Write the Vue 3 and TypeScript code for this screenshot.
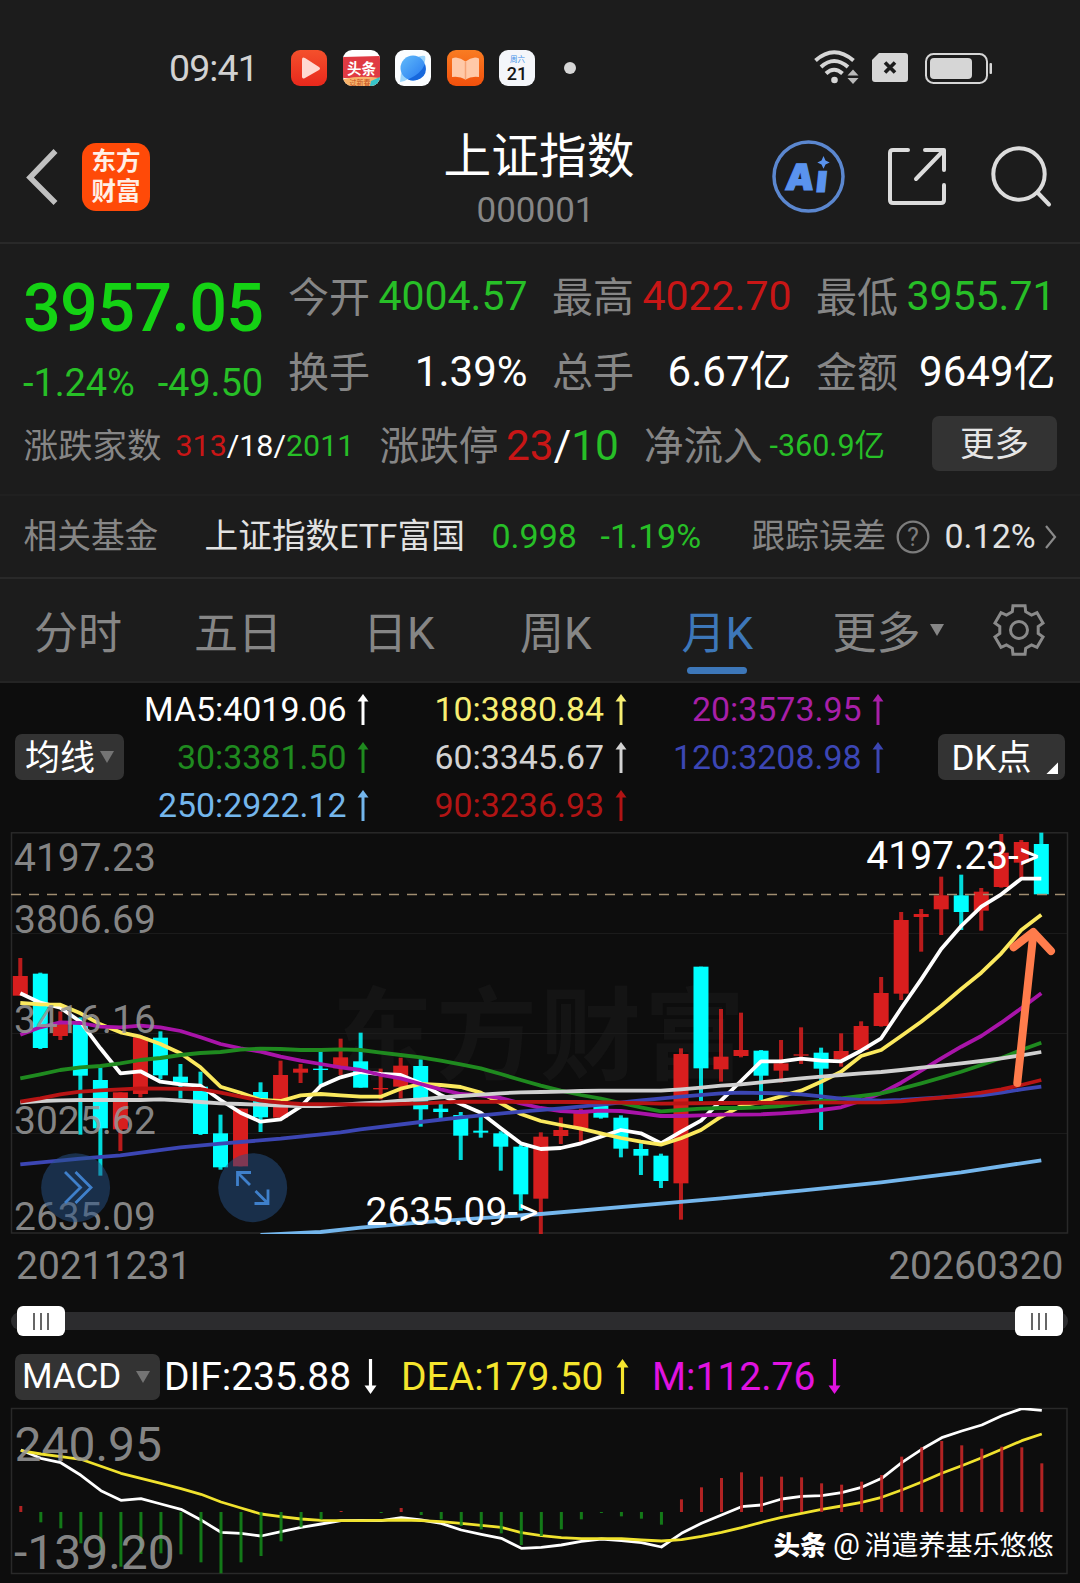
<script setup lang="ts">
interface Candle { up: boolean; high: number; top: number; bottom: number; low: number }
interface MaItem { text: string; color: string }
interface Line { color: string; pts: [number, number][] }

const STEP = 20.02
const X0 = 20.3

const stats = [
  { label: '今开', value: '4004.57', cls: 'down' },
  { label: '最高', value: '4022.70', cls: 'up' },
  { label: '最低', value: '3955.71', cls: 'down' },
  { label: '换手', value: '1.39%', cls: 'big' },
  { label: '总手', value: '6.67亿', cls: 'big' },
  { label: '金额', value: '9649亿', cls: 'big' },
]

const maItems: MaItem[] = [
  { text: 'MA5:4019.06', color: '#ffffff' },
  { text: '10:3880.84', color: '#f7ee72' },
  { text: '20:3573.95', color: '#a81fa8' },
  { text: '30:3381.50', color: '#1f8a1f' },
  { text: '60:3345.67', color: '#d2d2d2' },
  { text: '120:3208.98', color: '#3c46b4' },
  { text: '250:2922.12', color: '#74b6ec' },
  { text: '90:3236.93', color: '#b01414' },
]

// direction, high, body top, body bottom, low (thirds of a pixel below the plot origin)
const rawCandles: [number, number, number, number, number][] = [
  [1, 414, 468, 527, 527], [0, 458, 461, 684, 687], [1, 574, 612, 648, 660], [0, 592, 612, 767, 944],
  [0, 742, 780, 925, 1067], [1, 817, 817, 928, 993], [1, 645, 652, 822, 832], [0, 634, 653, 766, 778],
  [0, 732, 770, 788, 835], [0, 755, 800, 942, 945], [0, 884, 940, 1042, 1049], [1, 866, 866, 1039, 1039],
  [0, 787, 816, 892, 936], [1, 722, 765, 893, 893], [1, 732, 746, 758, 789], [0, 694, 746, 750, 795],
  [1, 656, 712, 745, 765], [0, 638, 724, 803, 803], [1, 746, 804, 808, 838], [1, 713, 737, 800, 835],
  [0, 718, 738, 868, 920], [0, 850, 866, 876, 894], [0, 876, 885, 947, 1020], [0, 888, 932, 938, 953],
  [0, 934, 940, 980, 1052], [0, 975, 980, 1123, 1172], [1, 937, 950, 1136, 1242], [1, 892, 930, 948, 972],
  [1, 866, 874, 925, 965], [0, 850, 857, 893, 896], [0, 886, 893, 986, 1012], [0, 970, 987, 1007, 1065],
  [0, 1001, 1007, 1083, 1104], [1, 685, 702, 1090, 1199], [0, 440, 440, 745, 843], [1, 567, 710, 748, 785],
  [1, 578, 690, 708, 712], [0, 690, 692, 767, 840], [1, 660, 730, 752, 787], [1, 622, 703, 707, 732],
  [0, 683, 698, 746, 930], [1, 640, 693, 717, 740], [1, 604, 618, 690, 690], [1, 471, 519, 618, 620],
  [1, 276, 300, 521, 540], [1, 267, 282, 291, 395], [1, 170, 226, 268, 345], [0, 164, 226, 276, 330],
  [1, 204, 215, 272, 332], [1, 42, 98, 201, 203], [1, 60, 66, 128, 180], [0, 38, 72, 223, 223],
]
const candles: Candle[] = rawCandles.map(([u, high, top, bottom, low]) => ({
  up: u === 1, high: high / 3, top: top / 3, bottom: bottom / 3, low: low / 3,
}))

const seq = (ys: number[]): [number, number][] => ys.map((y, i) => [i, y])

const maLines: Line[] = [
  { color: '#74b6ec', pts: [[12, 1245], [13, 1242], [15, 1236], [17, 1223], [20, 1207], [26, 1182], [32, 1151], [35, 1135], [39, 1112], [43, 1087], [47, 1057], [51, 1021]] },
  { color: '#ffffff', pts: seq([520, 548, 563, 605, 685, 760, 754, 785, 793, 797, 840, 878, 905, 898, 860, 798, 772, 756, 762, 765, 790, 825, 852, 878, 925, 970, 987, 984, 970, 950, 930, 940, 970, 935, 902, 842, 783, 724, 724, 716, 722, 724, 692, 655, 565, 478, 387, 318, 260, 223, 176, 176]) },
  { color: '#fbe95e', pts: seq([549, 553, 554, 580, 613, 637, 650, 672, 700, 742, 800, 818, 840, 843, 826, 822, 826, 830, 830, 806, 792, 795, 801, 818, 850, 882, 903, 915, 926, 940, 954, 965, 974, 955, 930, 890, 858, 846, 829, 812, 785, 755, 708, 690, 648, 605, 558, 507, 458, 400, 330, 284]) },
  { color: '#a914a9', pts: seq([644, 622, 607, 609, 620, 622, 617, 622, 633, 652, 672, 685, 695, 710, 722, 732, 742, 750, 765, 775, 792, 808, 822, 826, 834, 850, 864, 873, 876, 872, 873, 880, 888, 888, 886, 884, 884, 883, 880, 876, 870, 862, 842, 820, 788, 752, 715, 680, 648, 608, 565, 520]) },
  { color: '#1f8a1f', pts: seq([775, 763, 750, 742, 738, 730, 720, 714, 705, 699, 696, 689, 686, 687, 690, 690, 688, 690, 698, 705, 712, 722, 733, 745, 762, 780, 797, 812, 825, 836, 849, 862, 874, 870, 866, 864, 864, 862, 858, 850, 843, 835, 828, 820, 806, 790, 773, 755, 735, 714, 690, 668]) },
  { color: '#d0d0d0', pts: seq([848, 843, 841, 840, 840, 840, 840, 838, 842, 846, 850, 852, 854, 857, 858, 858, 854, 850, 847, 842, 838, 832, 828, 824, 820, 817, 816, 815, 813, 812, 812, 812, 812, 808, 803, 797, 793, 787, 781, 775, 770, 765, 760, 756, 750, 743, 737, 730, 723, 715, 706, 696]) },
  { color: '#3c46b4', pts: [[0, 1033], [3, 1016], [5, 1006], [8, 982], [10, 971], [13, 956], [16, 937], [17, 928], [20, 906], [22, 892], [25, 875], [27, 865], [29, 854], [31, 841], [33, 830], [35, 820], [36, 818], [38, 820], [39, 823], [40, 829], [41, 836], [42, 840], [43, 842], [44, 840], [46, 832], [48, 826], [49, 818], [50, 808], [51, 800]] },
  { color: '#b81414', pts: [[0, 845], [1, 835], [2, 823], [3, 815], [4, 811], [5, 808], [6, 805], [7, 806], [9, 807], [10, 818], [11, 830], [12, 842], [13, 848], [14, 852], [18, 854], [20, 850], [22, 845], [28, 846], [30, 848], [32, 851], [35, 849], [39, 848], [43, 847], [44, 844], [45, 838], [46, 833], [47, 826], [48, 818], [49, 808], [50, 795], [51, 780]] },
]

const dif = seq([630, 655, 668, 706, 752, 781, 776, 792, 808, 840, 877, 880, 888, 875, 862, 852, 842, 841, 842, 833, 840, 850, 870, 883, 895, 925, 922, 915, 904, 897, 902, 908, 921, 880, 850, 825, 800, 795, 777, 769, 767, 758, 742, 715, 668, 628, 593, 573, 555, 527, 506, 511])
const dea = seq([632, 642, 650, 658, 679, 700, 715, 730, 746, 763, 786, 804, 822, 830, 837, 841, 842, 842, 841, 840, 842, 845, 850, 856, 862, 878, 887, 893, 896, 896, 896, 900, 903, 899, 889, 877, 863, 847, 832, 820, 808, 798, 787, 772, 750, 726, 700, 677, 653, 628, 602, 582])
const bars = [798, 847, 865, 910, 945, 980, 942, 940, 943, 967, 1000, 967, 948, 904, 862, 838, 813, 816, 819, 804, 825, 838, 858, 868, 880, 915, 888, 868, 838, 819, 829, 836, 854, 778, 742, 714, 697, 710, 710, 712, 730, 734, 725, 705, 650, 622, 603, 616, 626, 620, 622, 670]

const path = (pts: [number, number][], dx = 0): string =>
  pts.map(([i, y]) => `${(X0 + dx + i * STEP).toFixed(1)},${(y / 3).toFixed(1)}`).join(' ')

const yLabels = [
  { t: '4197.23', y: 50.7 }, { t: '3806.69', y: 113 }, { t: '3416.16', y: 212.5 },
  { t: '3025.62', y: 313.5 }, { t: '2635.09', y: 410 },
]

const gear = Array.from({ length: 6 }, (_, k) => -90 + 60 * k)
  .flatMap((a) => [[19.5, a - 20], [25, a - 14], [25, a + 14], [19.5, a + 20]])
  .map(([r, a]) => {
    const t = (a * Math.PI) / 180
    return `${(27 + r * Math.cos(t)).toFixed(2)},${(27 + r * Math.sin(t)).toFixed(2)}`
  })
  .join(' ')
</script>

<template>
  <div class="app">
    <div class="status">
      <span class="time">09:41</span>
      <svg class="ic" width="244" height="38" viewBox="0 0 244 38">
        <defs>
          <linearGradient id="g1" x1="0" y1="0" x2="0" y2="1"><stop offset="0" stop-color="#f4502c" /><stop offset="1" stop-color="#e8281c" /></linearGradient>
          <linearGradient id="g2" x1="0" y1="0" x2="1" y2="1"><stop offset="0" stop-color="#62bbfa" /><stop offset="1" stop-color="#2477f0" /></linearGradient>
          <linearGradient id="g3" x1="0" y1="0" x2="0" y2="1"><stop offset="0" stop-color="#f97c22" /><stop offset="1" stop-color="#f2500c" /></linearGradient>
          <clipPath id="c1"><rect x="52" y="1" width="37" height="36" rx="9" /></clipPath>
        </defs>
        <rect x="0" y="1" width="36" height="36" rx="9" fill="url(#g1)" />
        <path d="M11 10.500v17q0 3 3 1.500l14-8q2-1.500 0-3L14 9Q11 7.500 11 10.500z" fill="#ffd9d0" />
        <g clip-path="url(#c1)">
          <rect x="52" y="1" width="37" height="36" fill="#fff" />
          <path d="M52 8l37-1v22H52z" fill="#e03a43" />
          <path d="M52 30q18-4 37-1v8H52z" fill="#f8b36b" />
          <path d="M80 32l9-4v9H79z" fill="#35c3c9" />
          <text x="70.500" y="25" text-anchor="middle" class="tt">头条</text>
          <text x="69" y="36" text-anchor="middle" class="tiny">过新春</text>
        </g>
        <rect x="104" y="1" width="36" height="36" rx="9" fill="#fbfdff" />
        <path d="M110 24l-1 9q4 0 8-3zM125 9q5-3 9-2 1 3-1 8z" fill="#9bd4fb" />
        <circle cx="122" cy="19" r="12.500" fill="url(#g2)" />
        <path d="M117 30.500Q130 25 134 15 137 25 129.500 29.500 123 33 117 30.500z" fill="#1767dc" />
        <rect x="156" y="1" width="37" height="36" rx="9" fill="url(#g3)" />
        <path d="M161 9.500q2-1 4-1 5 .5 9.500 4 4.500-3.500 9.500-4 2 0 4 1V28q-8-1-13.500 2.500Q169 27 161 28z" fill="#ffc9a8" />
        <path d="M174.500 12.500v18" stroke="#f5a376" stroke-width="1.500" />
        <rect x="208" y="1" width="36" height="36" rx="9" fill="#f4f6fa" />
        <text x="226.500" y="13" text-anchor="middle" class="week">周六</text>
        <text x="226" y="31" text-anchor="middle" class="day">21</text>
      </svg>
      <i class="dot"></i>
      <svg class="sys" width="180" height="38" viewBox="0 0 180 38">
        <g fill="none" stroke="#d6d6d6" stroke-width="4">
          <path d="M1.500 11.500Q20-5 39.500 11.500" />
          <path d="M7 18Q20 6 34 18" />
          <path d="M12 24.500Q20 17 28.500 24.500" />
        </g>
        <circle cx="20.500" cy="31" r="3.300" fill="#d6d6d6" />
        <path d="M33.500 26.500h11l-5.500-6zM33.500 29h11L39 35z" fill="#b9b9b9" />
        <path d="M65 4h26q3 0 3 3v23q0 3-3 3H61q-3 0-3-3V11z" fill="#d6d6d6" />
        <path d="M71 13.500l10 10M81 13.500l-10 10" stroke="#1c1c1c" stroke-width="3.600" />
        <rect x="112" y="5" width="61" height="29" rx="7.500" fill="none" stroke="#d6d6d6" stroke-width="2" />
        <rect x="116" y="9" width="42" height="21" rx="4" fill="#d6d6d6" />
        <rect x="175.500" y="14" width="2.500" height="11" rx="1" fill="#d6d6d6" />
      </svg>
    </div>

    <header class="head">
      <svg class="back" width="36" height="58" viewBox="0 0 36 58"><path d="M31.500 3L6 29.500 31.500 55" fill="none" stroke="#c0c0c0" stroke-width="5.500" /></svg>
      <div class="logo"><span>东方</span><span>财富</span></div>
      <div class="title"><h1>上证指数</h1><p>000001</p></div>
      <svg class="ai" width="74" height="76" viewBox="0 0 74 76">
        <circle cx="36.500" cy="37.500" r="34.500" fill="none" stroke="#5b87cf" stroke-width="3.500" />
        <g transform="translate(12.500 51) skewX(-6)"><text x="0" y="0" class="ai-t" font-size="36">A</text></g>
        <g transform="translate(43 52.500) skewX(-6)"><text x="0" y="0" class="ai-t" font-size="38">ı</text></g>
        <path d="M51.500 17l2 4.400 4.200 2-4.200 2-2 4.400-2-4.400-4.200-2 4.200-2z" fill="#5a93ee" />
      </svg>
      <svg class="share" width="60" height="60" viewBox="0 0 60 60" fill="none" stroke="#dcdcdc" stroke-width="4" stroke-linecap="round" stroke-linejoin="round">
        <path d="M21 3H6Q3 3 3 6V53q0 3 3 3H54q3 0 3-3V38" /><path d="M38 3H57V23M56 4L29 32" />
      </svg>
      <svg class="search" width="62" height="62" viewBox="0 0 62 62" fill="none" stroke="#dcdcdc" stroke-width="4">
        <circle cx="29" cy="28" r="25.700" /><path d="M48 47L59 58.500" stroke-linecap="round" />
      </svg>
    </header>

    <section class="quote">
      <div class="top">
        <div class="price">
          <strong>3957.05</strong>
          <div class="chg"><span>-1.24%</span><span>-49.50</span></div>
        </div>
        <div class="grid">
          <div v-for="s in stats" :key="s.label" class="stat">
            <span class="label">{{ s.label }}</span><span :class="s.cls">{{ s.value }}</span>
          </div>
        </div>
      </div>
      <div class="breadth">
        <span class="l1">涨跌家数</span>
        <span class="v1"><b class="up">313</b>/18/<b class="down">2011</b></span>
        <span class="l2">涨跌停</span>
        <span class="v2"><b class="up">23</b>/<b class="down">10</b></span>
        <span class="l3">净流入</span>
        <span class="v3">-360.9亿</span>
        <button class="more">更多</button>
      </div>
    </section>

    <section class="fund">
      <span class="label f1">相关基金</span>
      <span class="f2">上证指数ETF富国</span>
      <span class="down f3">0.998</span>
      <span class="down f4">-1.19%</span>
      <span class="label f5">跟踪误差</span>
      <svg class="q" width="34" height="34" viewBox="0 0 34 34"><circle cx="17" cy="17" r="15.300" fill="none" stroke="#7c7c7c" stroke-width="2.300" /><text x="17" y="26" text-anchor="middle" font-size="25" fill="#7c7c7c">?</text></svg>
      <span class="f6">0.12%</span>
      <svg class="arr" width="14" height="26" viewBox="0 0 14 26"><path d="M2 2l9 11L2 24" fill="none" stroke="#8a8a8a" stroke-width="2.200" /></svg>
    </section>

    <nav class="tabs">
      <span class="t1">分时</span><span class="t2">五日</span><span class="t3">日K</span><span class="t4">周K</span>
      <span class="t5 active">月K</span><span class="t6">更多</span><i class="tri"></i>
      <svg class="gear" width="54" height="54" viewBox="0 0 54 54" fill="none" stroke="#8a8a8a" stroke-width="3"><polygon :points="gear" /><circle cx="27" cy="27" r="8.500" /></svg>
    </nav>

    <main class="chart">
      <div class="ma">
        <button class="pill avg"><span>均线</span><i></i></button>
        <div class="ma-grid">
          <div v-for="m in maItems" :key="m.text" class="ma-item" :style="{ color: m.color }">
            {{ m.text }}
            <svg width="12" height="32" viewBox="0 0 12 32"><path d="M6 5V31" stroke="currentColor" stroke-width="3" /><path d="M6 0l5.500 7.500H.5z" fill="currentColor" /></svg>
          </div>
        </div>
        <button class="pill dk"><span>DK点</span><i></i></button>
      </div>

      <svg class="plot" width="1080" height="408" viewBox="0 12 1080 408">
        <defs><clipPath id="kp"><rect x="11" y="12" width="1057" height="402" /></clipPath></defs>
        <text x="332" y="252" class="wm">东方财富</text>
        <g stroke="#1b1b1b" stroke-width="1.200">
          <path d="M12 113.500H1067M12 213.500H1067M12 313.500H1067" />
          <rect x="11.500" y="12.800" width="1056" height="400.200" fill="none" stroke="#292929" stroke-width="1.500" />
        </g>
        <g v-for="(c, i) in candles" :key="i" :fill="c.up ? '#d81e1e' : '#00ffff'">
          <rect :x="X0 + i * STEP - 2" :y="c.high" width="4" :height="c.low - c.high" :opacity="0.85" />
          <rect :x="X0 + i * STEP - 7.500" :y="c.top" width="15" :height="c.bottom - c.top" />
        </g>
        <path d="M11 74.500H1067" stroke="#a08d70" stroke-width="1.400" stroke-dasharray="10 8" />
        <g clip-path="url(#kp)" fill="none" stroke-width="3.800" stroke-linejoin="round">
          <polyline v-for="l in maLines" :key="l.color" :points="path(l.pts)" :stroke="l.color" />
        </g>
        <text v-for="l in yLabels" :key="l.t" x="14" :y="l.y" class="yl" font-size="39">{{ l.t }}</text>
        <g class="note"><text x="866.300" y="49">4197.23-&gt;</text><text x="365.500" y="405">2635.09-&gt;</text></g>
        <g fill="#265288" fill-opacity="0.5"><circle cx="75.600" cy="367.700" r="34.500" /><circle cx="252.700" cy="367.700" r="34.500" /></g>
        <g fill="none" stroke="#3f80cb" stroke-width="2.800">
          <path d="M65 352l15.500 15.500L65 383M75.500 352L91 367.500 75.500 383" />
          <path d="M250 365L237.500 352.500M237.500 366V352.500H251M255.500 371L268 383.500M268 369.500V383.500H254.500" />
        </g>
        <g fill="none" stroke="#ff7c4c" stroke-linecap="round" stroke-linejoin="round" stroke-width="8">
          <path d="M1017.300 263L1033.300 114" /><path d="M1013.500 127.300L1033.300 112 1051 131" />
        </g>
      </svg>

      <div class="dates"><span>20211231</span><span>20260320</span></div>
      <div class="slider"><div class="track"><span class="thumb"><i></i><i></i><i></i></span><span class="thumb"><i></i><i></i><i></i></span></div></div>

      <div class="macd">
        <button class="pill mc">MACD<i></i></button>
        <span class="m1">DIF:235.88</span>
        <svg class="a1" width="13" height="35" viewBox="0 0 13 35"><path d="M6.500 0V29" stroke="#fff" stroke-width="3.200" /><path d="M6.500 35l6-8.500H.5z" fill="#fff" /></svg>
        <span class="m2">DEA:179.50</span>
        <svg class="a2" width="13" height="35" viewBox="0 0 13 35"><path d="M6.500 6V35" stroke="#f5e52d" stroke-width="3.200" /><path d="M6.500 0l6 8.500H.5z" fill="#f5e52d" /></svg>
        <span class="m3">M:112.76</span>
        <svg class="a3" width="13" height="35" viewBox="0 0 13 35"><path d="M6.500 0V29" stroke="#e013e0" stroke-width="3.200" /><path d="M6.500 35l6-8.500H.5z" fill="#e013e0" /></svg>
      </div>

      <svg class="plot" width="1080" height="180" viewBox="0 163 1080 180">
        <defs><clipPath id="mp"><rect x="11" y="168" width="1057" height="166" /></clipPath></defs>
        <rect x="11.500" y="168.500" width="1055.500" height="165" fill="none" stroke="#292929" stroke-width="1.500" />
        <g clip-path="url(#mp)" fill="none" stroke-width="2.800" stroke-linejoin="round">
          <polyline :points="path(dif, 0.5)" stroke="#fff" />
          <polyline :points="path(dea, 0.5)" stroke="#f0e22e" />
        </g>
        <rect v-for="(b, i) in bars" :key="i" :x="X0 + 0.500 + i * STEP - 1.500" :y="Math.min(b, 816) / 3" width="3" :height="Math.abs(b - 816) / 3" :fill="b < 816 ? '#c42626' : '#14851a'" fill-opacity="0.9" />
        <text x="14.500" y="221" class="yl" font-size="48">240.95</text>
        <text x="14" y="329" class="yl" font-size="48">-139.20</text>
        <text x="773.500" y="314.500" class="brand">头条</text>
        <text x="833" y="313.500" class="author at">@</text>
        <text x="864.500" y="314.500" class="author">消遣养基乐悠悠</text>
      </svg>
    </main>
  </div>
</template>

<style>
body { margin: 0; background: #0d0d0d; }
</style>

<style scoped>
.app { width: 1080px; height: 1583px; overflow: hidden; background: #1c1c1c; color: #fff; font-family: Roboto, "Noto Sans CJK SC", sans-serif; white-space: nowrap; }
svg { display: block; flex: none; }
svg text { font-family: Roboto, "Noto Sans CJK SC", sans-serif; }
b { font-weight: 400; }
button { border: 0; padding: 0; font-family: inherit; color: #fff; background: #333; border-radius: 7px; flex: none; box-sizing: border-box; }
.up { color: #c81616; }
.down { color: #27bf27; }
.label { color: #868686; }

.status { height: 136px; display: flex; align-items: center; box-sizing: border-box; }
.time { width: 122px; margin-left: 169px; font-size: 37.500px; letter-spacing: -0.900px; color: #d2d2d2; }
.dot { width: 12px; height: 12px; border-radius: 50%; background: #d6d6d6; margin-left: 28.500px; }
.sys { margin-left: 238px; }
.tt { font-size: 14.500px; font-weight: 700; fill: #fff; }
.tiny { font-size: 7px; fill: #c4501e; }
.week { font-size: 7.500px; fill: #3d8fe8; }
.day { font-size: 18px; font-weight: 500; fill: #151515; }

.head { height: 106px; display: flex; border-bottom: 2px solid #292929; }
.back { margin: 12px 0 0 24px; }
.logo { width: 68px; height: 68px; margin: 7px 0 0 22px; border-radius: 14px; background: #ff4a08; box-sizing: border-box; padding-top: 4px; display: flex; flex-direction: column; align-items: center; font-size: 24.500px; font-weight: 700; line-height: 29.500px; color: #ffefe6; }
.title { width: 240px; margin-left: 269px; display: flex; flex-direction: column; align-items: center; }
h1 { margin: -9px 0 0; font-size: 47.700px; font-weight: 400; line-height: 60px; }
.title p { margin: 2px 0 0; width: 126px; font-size: 35px; line-height: 44px; color: #868686; text-align: center; transform: translateX(-3.500px); }
.ai { margin: 3px 0 0 113px; }
.ai-t { font-family: Inter, sans-serif !important; font-weight: 900; fill: #5a93ee; stroke: #5a93ee; stroke-width: 1.200px; }
.share { margin: 11px 0 0 40.500px; }
.search { margin: 10px 0 0 43px; }

.quote { height: 252px; box-sizing: border-box; padding-top: 15px; border-bottom: 2px solid #202020; }
.top { height: 157px; display: flex; }
.price { width: 263px; padding: 7px 0 0 23px; box-sizing: border-box; }
.price strong { display: block; font-size: 66.500px; font-weight: 500; letter-spacing: -0.700px; line-height: 84px; color: #14d214; }
.chg { display: flex; justify-content: space-between; font-size: 38px; letter-spacing: -0.100px; line-height: 66px; color: #27bf27; }
.grid { margin-left: 25px; display: grid; grid-template-columns: repeat(3, 239.500px); column-gap: 24.500px; grid-auto-rows: 75px; }
.stat { display: flex; justify-content: space-between; font-size: 41px; line-height: 75px; }
.stat .label { position: relative; top: 1.500px; }
.stat .big { font-size: 42px; }
.breadth { height: 60px; display: flex; align-items: center; color: #fff; }
.l1 { width: 152px; margin-left: 23.500px; font-size: 34.500px; color: #868686; }
.v1 { width: 204px; font-size: 30.400px; }
.l2 { width: 126.500px; font-size: 39.700px; color: #868686; }
.v2 { width: 138px; font-size: 42.400px; }
.l3 { width: 125.500px; font-size: 39.500px; color: #868686; }
.v3 { width: 162.500px; font-size: 30.500px; color: #27bf27; }
.breadth span { line-height: 60px; }
.breadth .l1, .breadth .l2, .breadth .l3 { line-height: 63px; }
.more { width: 125px; height: 55px; font-size: 34.500px; line-height: 53px; padding-top: 2px; margin-top: -5px; color: #e6e6e6; }

.fund { height: 81px; display: flex; align-items: center; font-size: 34px; line-height: 81px; border-bottom: 2px solid #292929; color: #e2e2e2; }
.fund .f1, .fund .f2, .fund .f5 { line-height: 83px; }
.f1 { width: 181px; margin-left: 23.500px; font-size: 33.700px; }
.f2 { width: 287px; font-size: 33.700px; }
.f3 { width: 109px; }
.f4 { width: 151px; }
.f5 { width: 144px; font-size: 33.700px; }
.f6 { width: 99px; margin-left: 15px; }

.tabs { height: 102px; display: flex; font-size: 44px; line-height: 110px; color: #868686; border-bottom: 2px solid #242424; }
.t1 { width: 160px; margin-left: 34px; }
.t2 { width: 169px; }
.t3 { width: 157px; }
.t4 { width: 161.500px; }
.t5 { width: 73px; }
.t6 { width: 97px; margin-left: 78px; }
.active { color: #3d77b9; position: relative; }
.active::after { content: ""; position: absolute; left: 5px; top: 88px; width: 60px; height: 7px; border-radius: 4px; background: #3d77b9; }
.tri { border: 7px solid transparent; border-top: 12px solid #868686; border-bottom: 0; height: 0; margin-top: 45px; }
.gear { margin: 24px 0 0 48px; }

.chart { background: #0d0d0d; }
.ma { height: 149px; display: flex; }
.pill { height: 46px; display: flex; align-items: center; font-size: 35px; line-height: 46px; }
.pill i { border: 7px solid transparent; border-top: 12px solid #747474; border-bottom: 0; }
.pill span { padding-top: 3px; }
.avg { width: 109px; margin: 51px 0 0 15px; padding-left: 10px; gap: 5px; }
.ma-grid { display: grid; grid-template-columns: 245px 257.500px 257.500px; grid-auto-rows: 48px; padding-top: 3px; }
.ma-item { display: flex; justify-content: flex-end; align-items: center; gap: 10.500px; font-size: 33.900px; line-height: 48px; }
.dk { width: 127px; margin: 51px 0 0 53.500px; padding-left: 14px; }
.pill.dk i { border: 0; width: 12px; height: 12px; margin: 22px 0 0 15px; background: #fff; clip-path: polygon(100% 0, 100% 100%, 0 100%); }
.wm { font-size: 101px; letter-spacing: 3px; font-weight: 700; fill: #141414; }
.yl { fill: #969696; fill-opacity: 0.88; }
.note { font-size: 39px; fill: #fff; }
.dates { height: 52px; display: flex; justify-content: space-between; padding: 0 16.500px 0 16px; font-size: 39px; line-height: 52px; color: #868686; }
.slider { height: 58px; display: flex; align-items: center; padding: 0 12px 0 11px; }
.track { flex: 1; height: 18px; border-radius: 9px; background: #2c2c2e; display: flex; align-items: center; justify-content: space-between; padding: 0 5px 0 6px; }
.thumb { width: 48px; height: 30px; border-radius: 6px; background: #fff; display: flex; align-items: center; justify-content: center; gap: 5px; }
.thumb i { width: 2px; height: 17px; background: #666; }
.macd { height: 53px; display: flex; align-items: center; font-size: 39px; line-height: 54px; }
.mc { width: 145px; margin-left: 15px; padding-left: 7px; gap: 15px; line-height: 48px; }
.m1 { width: 200px; margin-left: 4px; }
.m2 { width: 215px; margin-left: 24px; color: #f5e52d; }
.m3 { width: 176px; margin-left: 23px; color: #e013e0; }
.brand { font-size: 26.500px; font-weight: 900; fill: #fff; }
.author { font-size: 27px; fill: #fff; }
.author.at { font-size: 30px; }
</style>
